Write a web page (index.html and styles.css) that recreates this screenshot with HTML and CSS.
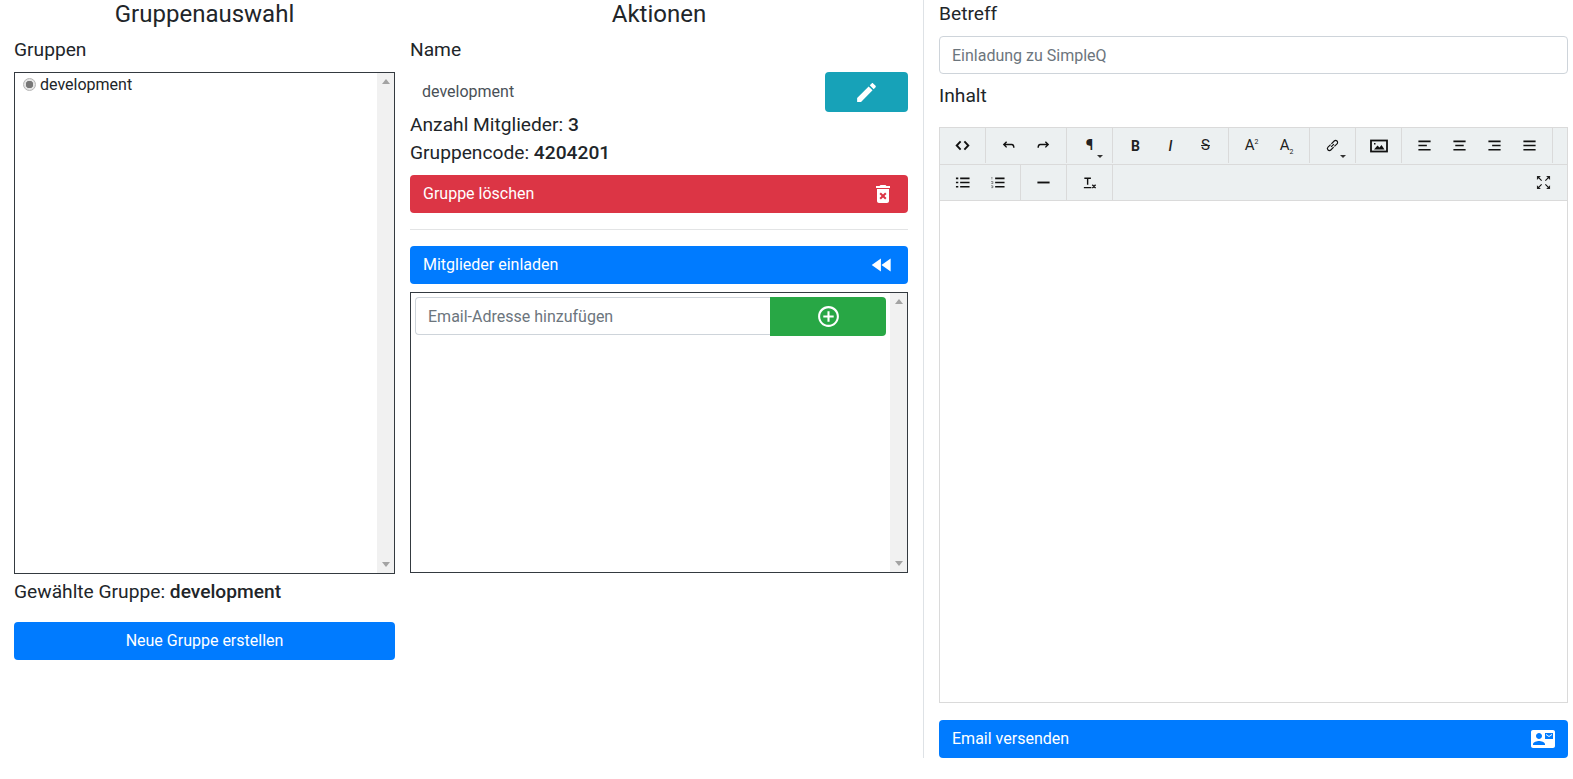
FILE: index.html
```html
<!DOCTYPE html>
<html lang="de">
<head>
<meta charset="utf-8">
<title>SimpleQ Gruppen</title>
<link rel="stylesheet" href="styles.css">
</head>
<body>
<div class="page">
  <div class="left-pane">
    <section class="col col-groups">
      <h4 class="title">Gruppenauswahl</h4>
      <div class="label">Gruppen</div>
      <div class="scrollbox groups-box">
        <div class="scroll-content">
          <div class="radio-row"><span class="radio"></span><span>development</span></div>
        </div>
        <div class="scrollbar"><i class="arrow up"></i><i class="arrow down"></i></div>
      </div>
      <div class="info selected">Gewählte Gruppe: <b>development</b></div>
      <button class="btn blue center">Neue Gruppe erstellen</button>
    </section>
    <section class="col col-actions">
      <h4 class="title">Aktionen</h4>
      <div class="label">Name</div>
      <div class="name-row">
        <div class="name-text">development</div>
        <button class="btn teal edit"><svg class="ic25" viewBox="0 0 24 24"><path d="M3 17.25V21h3.75L17.81 9.94l-3.75-3.75L3 17.25zM20.71 7.04c.39-.39.39-1.02 0-1.41l-2.34-2.34c-.39-.39-1.02-.39-1.41 0l-1.83 1.83 3.75 3.75 1.83-1.83z"/></svg></button>
      </div>
      <div class="info count">Anzahl Mitglieder: <b>3</b></div>
      <div class="info code">Gruppencode: <b>4204201</b></div>
      <button class="btn red between"><span>Gruppe löschen</span><svg class="ic24" viewBox="0 0 24 24"><path d="M6 19c0 1.1.9 2 2 2h8c1.1 0 2-.9 2-2V7H6v12zm2.46-7.12l1.41-1.41L12 12.59l2.12-2.12 1.41 1.41L13.41 14l2.12 2.12-1.41 1.41L12 15.41l-2.12 2.12-1.41-1.41L10.59 14l-2.13-2.12zM15.5 4l-1-1h-5l-1 1H5v2h14V4z"/></svg></button>
      <hr class="rule">
      <button class="btn blue between"><span>Mitglieder einladen</span><svg class="ic26" viewBox="0 0 24 24"><path d="M11 18V6l-8.5 6 8.5 6zm.5-6l8.500 6V6l-8.500 6z"/></svg></button>
      <div class="scrollbox invite-box">
        <div class="scroll-content invite-content">
          <div class="input-group">
            <div class="input grow">Email-Adresse hinzufügen</div>
            <button class="btn green add"><svg class="ic25" viewBox="0 0 24 24"><path d="M13 7h-2v4H7v2h4v4h2v-4h4v-2h-4V7zm-1-5C6.48 2 2 6.48 2 12s4.48 10 10 10 10-4.48 10-10S17.52 2 12 2zm0 18c-4.41 0-8-3.59-8-8s3.59-8 8-8 8 3.59 8 8-3.59 8-8 8z"/></svg></button>
          </div>
        </div>
        <div class="scrollbar"><i class="arrow up"></i><i class="arrow down"></i></div>
      </div>
    </section>
  </div>
  <section class="right-pane">
    <div class="label first">Betreff</div>
    <div class="input subject">Einladung zu SimpleQ</div>
    <div class="label inhalt">Inhalt</div>
    <div class="editor">
      <div class="toolbar">
        <div class="tb-row">
          <div class="tb-group"><span class="tb"><svg viewBox="0 0 16 16"><path class="s" d="M6 3.500 1.800 8 6 12.500M10 3.500 14.200 8 10 12.500"/></svg></span></div>
          <div class="tb-group">
            <span class="tb"><svg viewBox="0 0 16 16"><path class="t" d="M3 7h8.500c1.200 0 2.200 1 2.200 3.500M6 4 3 7l3 3"/></svg></span>
            <span class="tb"><svg viewBox="0 0 16 16"><path class="t" d="M13 7H4.500C3.300 7 2.300 8 2.300 10.500M10 4l3 3-3 3"/></svg></span>
          </div>
          <div class="tb-group"><span class="tb txt para"><span>¶</span><i class="caret"></i></span></div>
          <div class="tb-group">
            <span class="tb txt"><span>B</span></span>
            <span class="tb txt ital"><span>I</span></span>
            <span class="tb txt strike"><span>S</span></span>
          </div>
          <div class="tb-group">
            <span class="tb txt reg"><span>A<sup>2</sup></span></span>
            <span class="tb txt reg"><span>A<sub>2</sub></span></span>
          </div>
          <div class="tb-group"><span class="tb"><svg viewBox="0 0 16 16"><path class="thin" d="M6.500 9.500 9.500 6.500M6.800 6.200 9.800 3.200a2 2 0 0 1 3 3L10 9M9.200 9.800l-3 3a2 2 0 0 1-3-3L6 7"/></svg><i class="caret"></i></span></div>
          <div class="tb-group"><span class="tb"><svg class="wide" viewBox="0 0 18 14"><rect x="1" y="1.500" width="16" height="11" fill="none" stroke="#111" stroke-width="1.800"/><path d="M4 10.500 7.500 6.500l2 2 2-2.500 3 4.500zM4 4h1.500v1.500H4z" fill="#111"/></svg></span></div>
          <div class="tb-group">
            <span class="tb"><svg viewBox="0 0 16 16"><path class="l" d="M1.500 3.500h13M1.500 8h9M1.500 12.500h13"/></svg></span>
            <span class="tb"><svg viewBox="0 0 16 16"><path class="l" d="M1.500 3.500h13M3.500 8h9M1.500 12.500h13"/></svg></span>
            <span class="tb"><svg viewBox="0 0 16 16"><path class="l" d="M1.500 3.500h13M5.500 8h9M1.500 12.500h13"/></svg></span>
            <span class="tb"><svg viewBox="0 0 16 16"><path class="l" d="M1.500 3.500h13M1.500 8h13M1.500 12.500h13"/></svg></span>
          </div>
        </div>
        <div class="tb-row">
          <div class="tb-group">
            <span class="tb"><svg viewBox="0 0 16 16"><path class="l" d="M1 3.500h2.500M5.500 3.500h10M1 8h2.500M5.500 8h10M1 12.500h2.500M5.500 12.500h10"/></svg></span>
            <span class="tb"><svg viewBox="0 0 16 16"><path class="l" d="M5.500 3.500h10M5.500 8h10M5.500 12.500h10"/><path class="dots" d="M2 2.500v2M1.500 7h1.500v2H1.500M1.500 11.500h1.500v2H1.500"/></svg></span>
          </div>
          <div class="tb-group"><span class="tb"><svg viewBox="0 0 16 16"><path class="s" d="M1.500 8h13"/></svg></span></div>
          <div class="tb-group"><span class="tb"><svg viewBox="0 0 16 16"><path class="t" d="M2.500 3.500h7M6 3.500v7M2 13.500h8M11 10.500l3.500 3.500M14.500 10.500 11 14"/></svg></span></div>
          <div class="tb-spacer"></div>
          <span class="tb full"><svg viewBox="0 0 16 16"><path d="M1 1h4.200L1 5.200zM15 1v4.200L10.800 1zM1 15v-4.200L5.200 15zM15 15h-4.200l4.200-4.200z" fill="#222"/><path class="thin" d="M2.500 2.500l3.500 3.500M13.500 2.500 10 6M2.500 13.500 6 10M13.500 13.500 10 10"/></svg></span>
        </div>
      </div>
      <div class="editor-body"></div>
    </div>
    <button class="btn blue between send"><span>Email versenden</span><svg class="ic24" viewBox="0 0 24 24"><path d="M21 8V7l-3 2-3-2v1l3 2 3-2zm1-5H2C.9 3 0 3.900 0 5v14c0 1.100.9 2 2 2h20c1.100 0 1.990-.9 1.990-2L24 5c0-1.100-.9-2-2-2zM8 6c1.660 0 3 1.340 3 3s-1.340 3-3 3-3-1.340-3-3 1.340-3 3-3zm6 12H2v-1c0-2 4-3.100 6-3.100s6 1.100 6 3.100v1zm8-6h-8V6h8v6z"/></svg></button>
  </section>
</div>
</body>
</html>
```
FILE: styles.css
```css
* { box-sizing: border-box; }
html, body { margin: 0; padding: 0; }
body { font-family: Roboto, "Liberation Sans", sans-serif; font-size: 16px; line-height: 1.5; color: #212529; background: #fff; overflow: hidden; }
.page { display: flex; height: 779px; align-items: flex-start; }
.left-pane { width: 924px; height: 758px; border-right: 1px solid #dee2e6; display: flex; padding-left: 14px; gap: 15px; flex: none; }
.col { display: flex; flex-direction: column; }
.col-groups { width: 381px; }
.col-actions { width: 498px; }
.title { margin: 0; font-size: 24px; font-weight: 400; line-height: 29px; text-align: center; }
.label { font-size: 19.2px; line-height: 27px; margin-top: 7px; height: 27px; }
.scrollbox { border: 1px solid #343a40; display: flex; background: #fff; }
.groups-box { height: 502px; margin-top: 9px; }
.scroll-content { flex: 1; min-width: 0; }
.scrollbar { width: 17px; background: #f1f1f1; display: flex; flex-direction: column; justify-content: space-between; align-items: center; padding: 6px 0; flex: none; }
.arrow { display: block; width: 0; height: 0; border-left: 4px solid transparent; border-right: 4px solid transparent; }
.arrow.up { border-bottom: 5px solid #a3a3a3; }
.arrow.down { border-top: 5px solid #a3a3a3; }
.radio-row { display: flex; align-items: center; gap: 4px; padding-left: 8px; height: 22px; margin-top: 1px; }
.radio { width: 13px; height: 13px; border-radius: 50%; border: 1px solid #b5b5b5; background: radial-gradient(circle, #777 0 3.500px, #e4e4e4 4px); flex: none; margin-top: -2px; }
.info { font-size: 19.2px; line-height: 27px; }
.info b { font-weight: 500; }
.selected { margin-top: 4px; height: 27px; }
.btn { display: flex; align-items: center; height: 38px; border: 0; border-radius: 4px; font: 400 16px/24px Roboto, "Liberation Sans", sans-serif; color: #fff; padding: 0 13px; flex: none; width: 100%; }
.btn svg { fill: #fff; display: block; }
.blue { background: #007bff; }
.red { background: #dc3545; }
.teal { background: #17a2b8; }
.green { background: #28a745; }
.center { justify-content: center; margin-top: 17px; }
.between { justify-content: space-between; }
.ic24 { width: 24px; height: 24px; }
.ic25 { width: 25px; height: 25px; }
.ic26 { width: 26px; height: 26px; }
.name-row { display: flex; align-items: center; margin-top: 9px; height: 40px; }
.name-text { flex: 1; padding-left: 12px; color: #495057; }
.edit { width: 83px; height: 40px; justify-content: center; padding: 0; }
.count { margin-top: -1px; height: 28px; }
.code { height: 28px; }
.red { margin-top: 8px; }
.rule { border: 0; border-top: 1px solid #e3e4e5; margin: 16px 0 16px; height: 0; width: 100%; }
.invite-box { height: 281px; margin-top: 8px; }
.invite-content { padding: 4px; }
.input-group { display: flex; }
.input { height: 38px; border: 1px solid #ced4da; border-radius: 4px; padding: 7px 12px 5px; color: #6c757d; background: #fff; }
.grow { flex: 1; border-radius: 4px 0 0 4px; border-right: 0; }
.add { width: 116px; height: 39px; justify-content: center; padding: 0; border-radius: 0 4px 4px 0; }
.right-pane { width: 629px; margin-left: 15px; flex: none; display: flex; flex-direction: column; }
.label.first { margin-top: 0; }
.subject { margin-top: 9px; }
.label.inhalt { margin-top: 8px; }
.editor { margin-top: 18px; border: 1px solid #dadada; height: 576px; display: flex; flex-direction: column; }
.toolbar { background: #ecf0f1; border-bottom: 1px solid #dadada; }
.tb-row { display: flex; height: 36px; }
.tb-row + .tb-row { border-top: 1px solid #dadada; }
.tb-group { display: flex; padding: 0 5px; border-right: 1px solid #dadada; height: 35px; }
.tb-spacer { flex: 1; }
.tb { width: 35px; height: 35px; display: flex; align-items: center; justify-content: center; position: relative; font-size: 14px; font-weight: 700; color: #222; flex: none; }
.tb svg { width: 15px; height: 15px; display: block; }
.tb svg.wide { width: 18px; height: 14px; }
.full { margin-right: 6px; }
.full svg { width: 15px; height: 15px; }
.s, .t, .l, .thin, .dots { fill: none; stroke: #111; }
.s { stroke-width: 2; }
.t { stroke-width: 1.500; }
.l { stroke-width: 1.800; }
.thin { stroke-width: 1.200; }
.dots { stroke-width: .8; stroke-dasharray: 1 .5; }
.txt { line-height: 1; }
.para { font-size: 15px; }
.ital { font-style: italic; font-weight: 500; }
.strike { font-weight: 400; font-size: 15px; text-decoration: none; }
.strike span { text-decoration: line-through; }
.reg { font-weight: 400; font-size: 15px; }
.reg sup, .reg sub { font-size: 7px; line-height: 0; }
.caret { position: absolute; right: 4px; bottom: 5px; width: 0; height: 0; border-left: 3px solid transparent; border-right: 3px solid transparent; border-top: 3px solid #333; }
.editor-body { flex: 1; background: #fff; }
.send { margin-top: 17px; }
```
